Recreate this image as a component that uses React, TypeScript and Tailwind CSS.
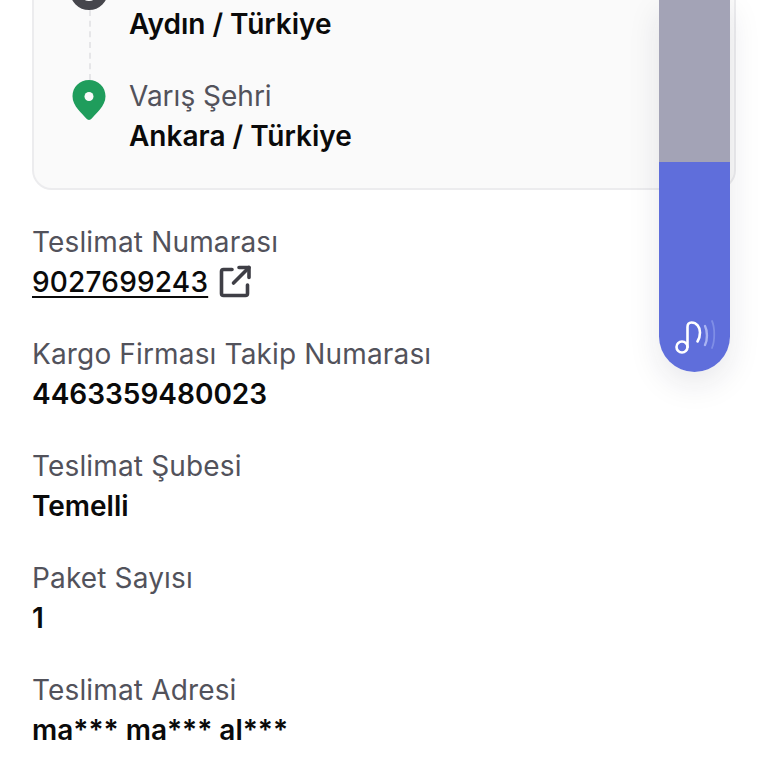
import React from 'react';

const rows: { label: string; value: string; link?: boolean }[] = [
  { label: 'Teslimat Numarası', value: '9027699243', link: true },
  { label: 'Kargo Firması Takip Numarası', value: '4463359480023' },
  { label: 'Teslimat Şubesi', value: 'Temelli' },
  { label: 'Paket Sayısı', value: '1' },
  { label: 'Teslimat Adresi', value: 'ma*** ma*** al***' },
];

function Pin() {
  return (
    <svg width="34" height="40" viewBox="0 0 34 40" className="block">
      <path
        d="M17 0C7.600 0 .5 7.200.5 16.200c0 5.200 2.400 9.400 5.600 13.200 2.900 3.400 5.900 6.400 8.200 9.200 1.400 1.700 4 1.700 5.400 0 2.300-2.800 5.300-5.800 8.200-9.200 3.200-3.800 5.600-8 5.600-13.200C33.500 7.200 26.400 0 17 0z"
        fill="#1f9d5c"
      />
      <circle cx="17" cy="16.500" r="4.500" fill="#fafafa" />
    </svg>
  );
}

function ExternalLink() {
  return (
    <svg width="36" height="36" viewBox="0 0 36 36" fill="none" stroke="#3f3f46" strokeWidth="3.600" strokeLinecap="round" strokeLinejoin="round">
      <path d="M15 5.500H6.500A2 2 0 0 0 4.500 7.500v22a2 2 0 0 0 2 2h22a2 2 0 0 0 2-2V21" />
      <path d="M22 3.500h10v10" />
      <path d="M32 3.500 16.500 19" />
    </svg>
  );
}

function MusicWaves() {
  return (
    <svg width="46" height="38" viewBox="0 0 46 38" fill="none" strokeLinecap="round">
      <circle cx="7" cy="28" r="5.500" stroke="#fff" strokeWidth="2.600" />
      <path d="M12.500 28V8c0-3 1.500-4.500 4-4.500 5 0 8.500 4.500 8.500 10 0 3.500-1 6.500-2.500 9" stroke="#fff" strokeWidth="2.600" />
      <path d="M30 7c2.600 4.800 2.600 14.200 0 19" stroke="#aab4f2" strokeWidth="2.400" />
      <path d="M37 2c3 6.500 3 20 0 27" stroke="#7f8ee6" strokeWidth="1.800" />
    </svg>
  );
}

export default function App() {
  return (
    <div className="relative h-[768px] w-[768px] overflow-hidden bg-white font-['Inter',sans-serif] text-[28px] leading-[40px]">
      <div className="-mt-[60px] px-[32px]">
        {/* Route card, its top is scrolled off */}
        <div className="flex h-[250px] w-[704px] flex-col justify-end gap-[32px] rounded-[20px] border-2 border-[#ececee] bg-[#fafafa] pb-[32px] pl-[38px]">
          <div className="relative flex gap-[21px]">
            <div className="w-[36px]">
              <div className="-ml-[2px] mt-[8px] h-[38px] w-[38px] rounded-full border-[9px] border-[#46464c] bg-white" />
              <div className="absolute left-[17px] top-[46px] h-[70px] border-l-2 border-dashed border-[#e6e6e8]" />
            </div>
            <div>
              <div className="text-[#52525b]">Çıkış Şehri</div>
              <div className="font-semibold text-[#0a0a0a]">Aydın / Türkiye</div>
            </div>
          </div>
          <div className="flex gap-[21px]">
            <div className="w-[36px] pt-[4px]">
              <Pin />
            </div>
            <div>
              <div className="text-[#52525b]">Varış Şehri</div>
              <div className="font-semibold text-[#0a0a0a]">Ankara / Türkiye</div>
            </div>
          </div>
        </div>

        <div className="mt-[32px] flex flex-col gap-[32px]">
          {rows.map((row) => (
            <div key={row.label}>
              <div className="tracking-[0.15px] text-[#52525b]">{row.label}</div>
              {row.link ? (
                <div className="flex items-center gap-[9px] font-medium tracking-[0.2px] text-[#0a0a0a]">
                  <span className="underline underline-offset-[4px]">{row.value}</span>
                  <ExternalLink />
                </div>
              ) : (
                <div className="font-semibold text-[#0a0a0a]">{row.value}</div>
              )}
            </div>
          ))}
        </div>
      </div>

      {/* Floating audio pill */}
      <div className="absolute right-[38px] top-0 flex h-[372px] w-[71px] flex-col overflow-hidden rounded-b-full shadow-[0_12px_32px_rgba(30,30,60,0.10)]">
        <div className="h-[162px] bg-[#a3a3b6]" />
        <div className="flex flex-1 items-end justify-center bg-[#5f6edb] pb-[15px] pl-[6px]">
          <MusicWaves />
        </div>
      </div>
    </div>
  );
}
